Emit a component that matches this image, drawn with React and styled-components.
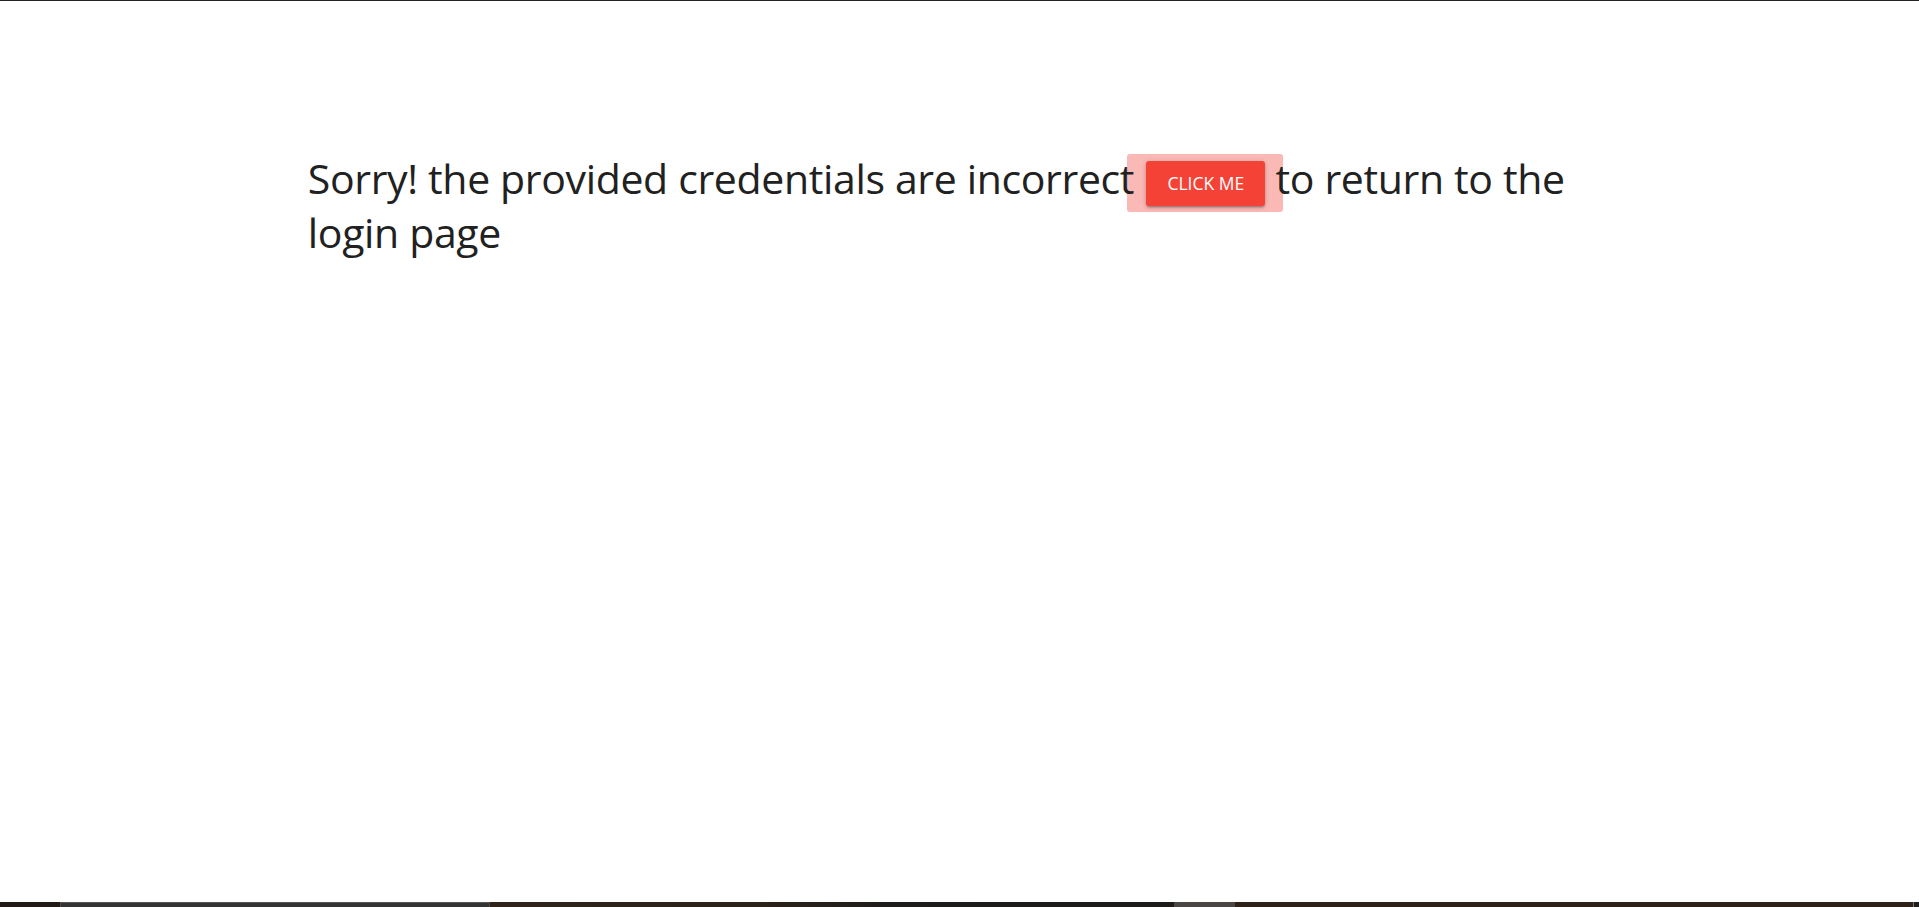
import React from "react";
import styled, { createGlobalStyle } from "styled-components";

const Global = createGlobalStyle`
  html { background: #ffffff; }
  html, body { margin: 0; padding: 0; }
  body { font-family: "Open Sans", "Noto Sans", Arial, sans-serif; }
  #root { min-height: 100vh; }
`;

const Page = styled.div`
  min-height: 100vh;
  display: flex;
  flex-direction: column;
  border-top: 1px solid #222222;
  box-sizing: border-box;
`;

const Main = styled.main`
  flex: 1;
  width: 70%;
  margin: 0 auto;
  padding: 151px 15px 0 20px;
  box-sizing: border-box;
`;

const Message = styled.h4`
  position: relative;
  z-index: 0;
  margin: 0;
  font-family: "Open Sans", "Noto Sans", sans-serif;
  font-weight: 400;
  font-size: 41px;
  line-height: 53px;
  letter-spacing: -0.35px;
  color: #212121;
`;

const Button = styled.a`
  position: relative;
  display: inline-block;
  height: 45px;
  line-height: 45px;
  padding: 0 21px;
  margin-left: 2px;
  border-radius: 3px;
  background: #f44336;
  color: #ffffff;
  font-family: "Open Sans", "Noto Sans", sans-serif;
  font-size: 17.5px;
  letter-spacing: 0;
  text-transform: uppercase;
  text-decoration: none;
  vertical-align: 4px;
  box-shadow: 0 2px 2px 0 rgba(0, 0, 0, 0.14), 0 3px 1px -2px rgba(0, 0, 0, 0.12),
    0 1px 5px 0 rgba(0, 0, 0, 0.2);
  cursor: pointer;

  &::before {
    content: "";
    position: absolute;
    top: -7px;
    bottom: -6px;
    left: -19px;
    right: -18px;
    border-radius: 3px;
    background: #fab9b5;
    z-index: -1;
  }
`;

const Strip = styled.div`
  height: 5px;
  display: flex;
`;

const Seg = styled.div`
  height: 100%;
  flex: 0 0 ${(p) => p.$w}px;
  background: ${(p) => p.$bg};
  box-sizing: border-box;
  border-top: ${(p) => (p.$edge ? "1px solid #555" : "none")};
  border-left: ${(p) => (p.$edge ? "1px solid #4a4a4a" : "none")};
  border-right: ${(p) => (p.$edge ? "1px solid #4a4a4a" : "none")};
`;

const segments = [
  { w: 60, bg: "#221a16" },
  { w: 430, bg: "#333333", edge: true },
  { w: 684, bg: "linear-gradient(90deg, #30241a 0%, #2b2219 40%, #1d1c1b 60%, #1c1b1a 100%)" },
  { w: 61, bg: "#4a4643" },
  { w: 678, bg: "#2e2118" },
  { w: 1, bg: "#777777" },
  { w: 5, bg: "#1f1d1c" },
];

export default function App() {
  return (
    <>
      <Global />
      <Page>
        <Main>
          <Message>
            Sorry! the provided credentials are incorrect <Button>Click me</Button> to return to the login page
          </Message>
        </Main>
        <Strip>
          {segments.map((s, i) => (
            <Seg key={i} $w={s.w} $bg={s.bg} $edge={s.edge} />
          ))}
        </Strip>
      </Page>
    </>
  );
}
